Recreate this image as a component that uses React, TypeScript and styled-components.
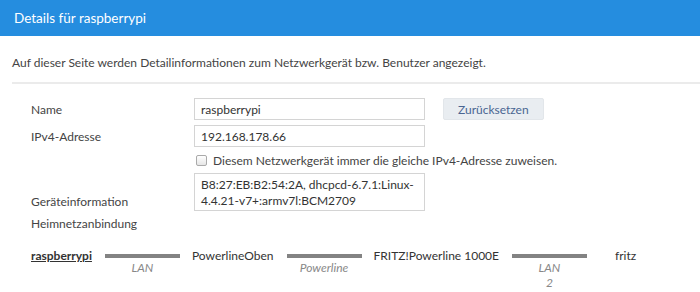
import React from 'react';
import styled, { createGlobalStyle } from 'styled-components';

const GlobalStyle = createGlobalStyle`
  html, body {
    margin: 0;
    padding: 0;
    background: #fff;
    font-family: Lato, "Open Sans", sans-serif;
    font-size: 12px;
    color: #444;
  }
`;

const Page = styled.div`
  width: 700px;
  height: 292px;
  overflow: hidden;
`;

const Header = styled.div`
  height: 36px;
  background: #258ddf;
  color: #fff;
  font-size: 13.5px;
  display: flex;
  align-items: center;
  padding: 0 14px;
`;

const Intro = styled.p`
  margin: 0;
  padding: 18px 12px 0;
  line-height: 17px;
  color: #444;
`;

const Divider = styled.div`
  height: 2px;
  background: #ebebeb;
  margin: 11px 0 0 12px;
`;

const Form = styled.div`
  display: grid;
  grid-template-columns: 163px 231px 1fr;
  row-gap: 5px;
  padding: 14px 0 0 31px;
  align-items: center;
`;

const Label = styled.div<{ $alignEnd?: boolean }>`
  color: #444;
  align-self: ${({ $alignEnd }) => ($alignEnd ? 'end' : 'center')};
  line-height: 15px;
  grid-column: 1;
  padding-bottom: ${({ $alignEnd }) => ($alignEnd ? '2px' : '0')};
`;

const Field = styled.div`
  box-sizing: border-box;
  height: 22px;
  border: 1px solid #d4d4d4;
  padding: 0 6px;
  display: flex;
  align-items: center;
  color: #333;
  grid-column: 2;
`;

const InfoBox = styled.div`
  box-sizing: border-box;
  border: 1px solid #d4d4d4;
  padding: 3px 6px;
  line-height: 16px;
  color: #333;
  height: 38px;
  white-space: nowrap;
  grid-column: 2;
`;

const ResetButton = styled.button`
  grid-column: 3;
  justify-self: start;
  margin-left: 18px;
  height: 22px;
  padding: 0 14px;
  border: 1px solid #e2e6ea;
  border-radius: 2px;
  background: #e9edf1;
  color: #4a6591;
  font-family: inherit;
  font-size: 12px;
`;

const CheckRow = styled.label`
  grid-column: 2 / span 2;
  display: flex;
  align-items: center;
  gap: 6px;
  color: #444;
  padding-left: 2px;
  height: 16px;
  white-space: nowrap;
`;

const Box = styled.span`
  width: 9px;
  height: 9px;
  border: 1px solid #aaa;
  border-radius: 2px;
  background: linear-gradient(#fff, #e6e6e6);
`;

const Topology = styled.div`
  display: flex;
  align-items: flex-start;
  padding: 17px 0 0 31px;
`;

const Node = styled.div<{ $current?: boolean }>`
  color: #333;
  line-height: 16px;
  white-space: nowrap;
  font-weight: ${({ $current }) => ($current ? 700 : 400)};
  text-decoration: ${({ $current }) => ($current ? 'underline' : 'none')};
`;

const Link = styled.div<{ $trail?: number }>`
  width: 75px;
  margin: 0 ${({ $trail }) => $trail ?? 12}px 0 13px;
  display: flex;
  flex-direction: column;
  align-items: center;
  padding-top: 6px;
`;

const Bar = styled.div`
  width: 100%;
  height: 4px;
  background: #838383;
`;

const LinkLabel = styled.div`
  font-style: italic;
  color: #888;
  text-align: center;
  line-height: 15px;
  margin-top: 2px;
`;

const App = () => (
  <Page>
    <GlobalStyle />
    <Header>Details für raspberrypi</Header>
    <Intro>Auf dieser Seite werden Detailinformationen zum Netzwerkgerät bzw. Benutzer angezeigt.</Intro>
    <Divider />
    <Form>
      <Label>Name</Label>
      <Field>raspberrypi</Field>
      <ResetButton>Zurücksetzen</ResetButton>

      <Label>IPv4-Adresse</Label>
      <Field>192.168.178.66</Field>

      <CheckRow>
        <Box />
        Diesem Netzwerkgerät immer die gleiche IPv4-Adresse zuweisen.
      </CheckRow>

      <Label $alignEnd>Geräteinformation</Label>
      <InfoBox>
        B8:27:EB:B2:54:2A, dhcpcd-6.7.1:Linux-
        <br />
        4.4.21-v7+:armv7l:BCM2709
      </InfoBox>

      <Label>Heimnetzanbindung</Label>
    </Form>
    <Topology>
      <Node $current>raspberrypi</Node>
      <Link>
        <Bar />
        <LinkLabel>LAN</LinkLabel>
      </Link>
      <Node>PowerlineOben</Node>
      <Link>
        <Bar />
        <LinkLabel>Powerline</LinkLabel>
      </Link>
      <Node>FRITZ!Powerline 1000E</Node>
      <Link $trail={28}>
        <Bar />
        <LinkLabel>
          LAN
          <br />2
        </LinkLabel>
      </Link>
      <Node>fritz</Node>
    </Topology>
  </Page>
);

export default App;
